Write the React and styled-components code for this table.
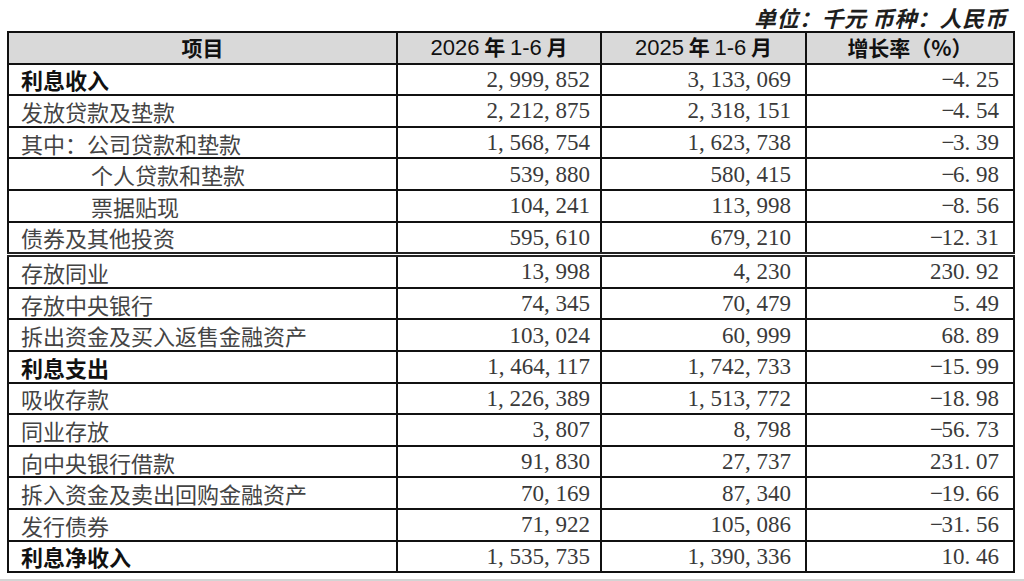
import React from "react";
import styled, { createGlobalStyle } from "styled-components";

const GlobalStyle = createGlobalStyle`
  html, body {
    margin: 0;
    padding: 0;
    background: #fff;
  }
  body {
    font-family: "Noto Sans CJK SC", sans-serif;
  }
`;

const Page = styled.div`
  width: 1024px;
  height: 581px;
  box-sizing: border-box;
  padding: 3px 11px 0 7px;
  display: flex;
  flex-direction: column;
  border-bottom: 2px solid #d4d4d4;
  overflow: hidden;
`;

const Unit = styled.div`
  align-self: flex-end;
  margin-right: 6px;
  height: 28px;
  line-height: 28px;
  font-size: 22px;
  font-weight: 700;
  font-style: italic;
  color: #1e1e1e;
  letter-spacing: 0.5px;
`;

const Table = styled.table`
  width: 1006px;
  border-collapse: collapse;
  table-layout: fixed;
  border: 2px solid #111;
`;

const Head = styled.th`
  height: 29.6px;
  padding: 0;
  border: 2px solid #111;
  background: #d9d9d9;
  color: #111;
  font-size: 21px;
  font-weight: 700;
  text-align: center;
  vertical-align: middle;
  line-height: 1;
`;

const Year = styled.span`
  font-family: "Liberation Sans", sans-serif;
  font-weight: 400;
  font-size: 22px;
`;

const Row = styled.tr`
  & > td {
    border-bottom: ${(p) => (p.$split ? "5px double #222" : "2px solid #111")};
  }
`;

const Label = styled.td`
  height: 29.6px;
  padding: 0 0 0 ${(p) => (p.$indent ? 82 : 12)}px;
  border: 2px solid #111;
  font-size: 22px;
  line-height: 1;
  vertical-align: middle;
  font-weight: ${(p) => (p.$bold ? 700 : 400)};
  color: ${(p) => (p.$bold ? "#111" : "#444")};
  white-space: nowrap;
`;

const Value = styled.td`
  height: 29.6px;
  padding: 0 ${(p) => p.$pad}px 0 0;
  border: 2px solid #111;
  text-align: right;
  vertical-align: middle;
  font-family: "Liberation Serif", serif;
  font-size: 23px;
  line-height: 1;
  color: #3a3a3a;
  white-space: nowrap;
`;

const Mark = styled.span`
  display: inline-block;
  width: 0.5em;
  text-align: ${(p) => (p.$center ? "center" : "left")};
`;

const rows = [
  { label: "利息收入", bold: true, a: "2,999,852", b: "3,133,069", c: "-4.25" },
  { label: "发放贷款及垫款", a: "2,212,875", b: "2,318,151", c: "-4.54" },
  { label: "其中：公司贷款和垫款", a: "1,568,754", b: "1,623,738", c: "-3.39" },
  { label: "个人贷款和垫款", indent: true, a: "539,880", b: "580,415", c: "-6.98" },
  { label: "票据贴现", indent: true, a: "104,241", b: "113,998", c: "-8.56" },
  { label: "债券及其他投资", split: true, a: "595,610", b: "679,210", c: "-12.31" },
  { label: "存放同业", a: "13,998", b: "4,230", c: "230.92" },
  { label: "存放中央银行", a: "74,345", b: "70,479", c: "5.49" },
  { label: "拆出资金及买入返售金融资产", a: "103,024", b: "60,999", c: "68.89" },
  { label: "利息支出", bold: true, a: "1,464,117", b: "1,742,733", c: "-15.99" },
  { label: "吸收存款", a: "1,226,389", b: "1,513,772", c: "-18.98" },
  { label: "同业存放", a: "3,807", b: "8,798", c: "-56.73" },
  { label: "向中央银行借款", a: "91,830", b: "27,737", c: "231.07" },
  { label: "拆入资金及卖出回购金融资产", a: "70,169", b: "87,340", c: "-19.66" },
  { label: "发行债券", a: "71,922", b: "105,086", c: "-31.56" },
  { label: "利息净收入", bold: true, a: "1,535,735", b: "1,390,336", c: "10.46" },
];

// SimSun-style half-width punctuation: commas, points and minus take a full digit slot
const Num = ({ value }) => (
  <>
    {value.split(/([,.\-])/).map((part, i) => {
      if (part === ",") return <Mark key={i}>,</Mark>;
      if (part === ".") return <Mark key={i}>.</Mark>;
      if (part === "-") return <Mark key={i} $center>−</Mark>;
      return part;
    })}
  </>
);

export default function App() {
  return (
    <>
      <GlobalStyle />
      <Page>
        <Unit>单位：千元 币种：人民币</Unit>
        <Table>
          <colgroup>
            <col style={{ width: 389 }} />
            <col style={{ width: 204 }} />
            <col style={{ width: 205 }} />
            <col style={{ width: 208 }} />
          </colgroup>
          <thead>
            <tr>
              <Head>项目</Head>
              <Head>
                <Year>2026</Year> 年 <Year>1-6</Year> 月
              </Head>
              <Head>
                <Year>2025</Year> 年 <Year>1-6</Year> 月
              </Head>
              <Head>增长率（%）</Head>
            </tr>
          </thead>
          <tbody>
            {rows.map((r) => (
              <Row key={r.label} $split={r.split}>
                <Label $bold={r.bold} $indent={r.indent}>
                  {r.label}
                </Label>
                <Value $pad={10}>
                  <Num value={r.a} />
                </Value>
                <Value $pad={14}>
                  <Num value={r.b} />
                </Value>
                <Value $pad={14}>
                  <Num value={r.c} />
                </Value>
              </Row>
            ))}
          </tbody>
        </Table>
      </Page>
    </>
  );
}
